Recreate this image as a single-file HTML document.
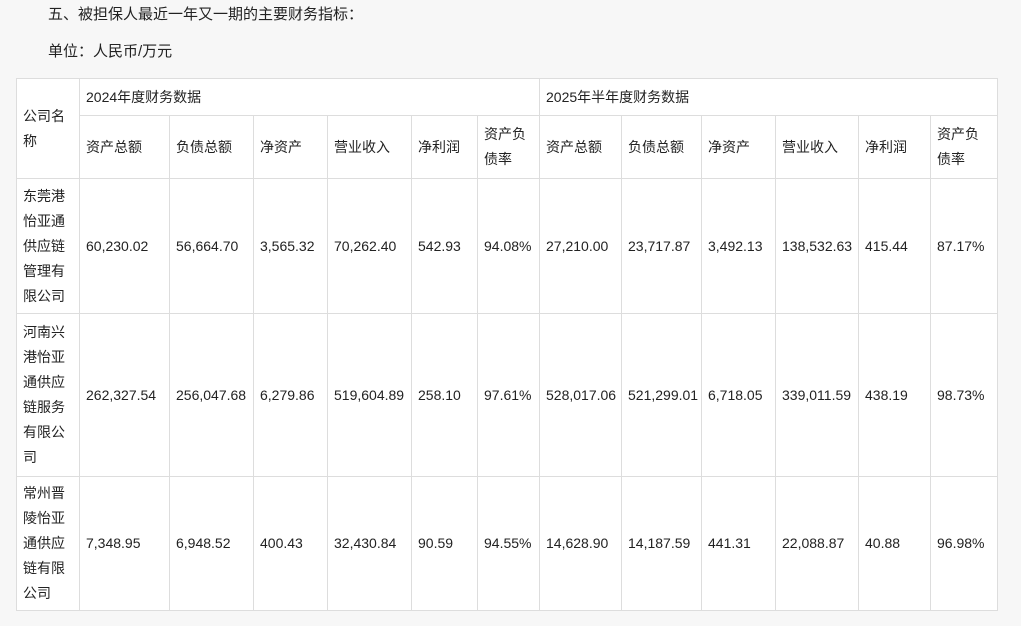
<!DOCTYPE html>
<html><head><meta charset="utf-8"><style>
html,body{margin:0;padding:0;background:#f7f7f7;width:1021px;height:626px;overflow:hidden;font-family:"Liberation Sans","Noto Sans CJK SC",sans-serif;color:#222;}
.t1{position:absolute;left:48px;top:5px;font-size:15px;line-height:20px;}
.t2{position:absolute;left:48px;top:42px;font-size:15px;line-height:20px;}
table{position:absolute;left:16px;top:78px;border-collapse:collapse;table-layout:fixed;background:#fff;font-size:14px;}
td{border:1px solid #ddd;padding:0 0 0 6px;vertical-align:middle;line-height:25px;overflow:hidden;white-space:nowrap;}
td.w{white-space:normal;word-break:break-all;}
tr.h1 td{height:36px;}
tr.h2 td{height:62px;}
tr.r1 td{height:134px;}
tr.r2 td{height:162px;}
tr.r3 td{height:133px;}
</style></head><body>
<div class="t1">五、被担保人最近一年又一期的主要财务指标：</div>
<div class="t2">单位：人民币/万元</div>
<table>
<colgroup><col style="width:63px"><col style="width:90px"><col style="width:84px"><col style="width:74px"><col style="width:84px"><col style="width:66px"><col style="width:62px"><col style="width:82px"><col style="width:80px"><col style="width:74px"><col style="width:83px"><col style="width:72px"><col style="width:67px"></colgroup>
<tr class="h1"><td rowspan="2" class="w" style="padding-right:8px">公司名称</td><td colspan="6">2024年度财务数据</td><td colspan="6">2025年半年度财务数据</td></tr>
<tr class="h2"><td>资产总额</td><td>负债总额</td><td>净资产</td><td>营业收入</td><td>净利润</td><td class="w" style="padding-right:12px">资产负债率</td><td>资产总额</td><td>负债总额</td><td>净资产</td><td>营业收入</td><td>净利润</td><td class="w" style="padding-right:12px">资产负债率</td></tr>
<tr class="r1"><td class="w" style="padding-right:8px">东莞港怡亚通供应链管理有限公司</td><td>60,230.02</td><td>56,664.70</td><td>3,565.32</td><td>70,262.40</td><td>542.93</td><td>94.08%</td><td>27,210.00</td><td>23,717.87</td><td>3,492.13</td><td>138,532.63</td><td>415.44</td><td>87.17%</td></tr>
<tr class="r2"><td class="w" style="padding-right:8px">河南兴港怡亚通供应链服务有限公司</td><td>262,327.54</td><td>256,047.68</td><td>6,279.86</td><td>519,604.89</td><td>258.10</td><td>97.61%</td><td>528,017.06</td><td>521,299.01</td><td>6,718.05</td><td>339,011.59</td><td>438.19</td><td>98.73%</td></tr>
<tr class="r3"><td class="w" style="padding-right:8px">常州晋陵怡亚通供应链有限公司</td><td>7,348.95</td><td>6,948.52</td><td>400.43</td><td>32,430.84</td><td>90.59</td><td>94.55%</td><td>14,628.90</td><td>14,187.59</td><td>441.31</td><td>22,088.87</td><td>40.88</td><td>96.98%</td></tr>
</table>
</body></html>
